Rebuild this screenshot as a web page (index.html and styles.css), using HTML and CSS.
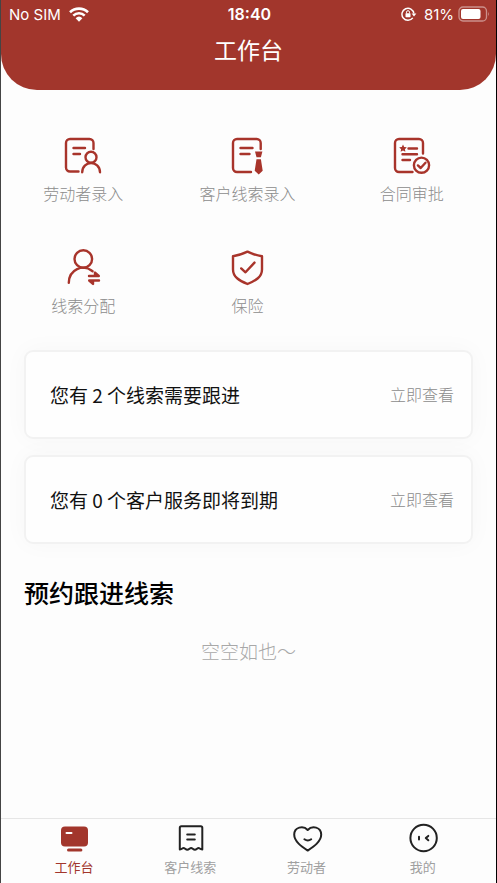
FILE: index.html
```html
<!DOCTYPE html>
<html lang="zh-CN">
<head>
<meta charset="utf-8">
<meta name="viewport" content="width=device-width, initial-scale=1">
<title>工作台</title>
<link rel="stylesheet" href="styles.css">
</head>
<body>
<div class="app">
  <header class="header">
    <div class="status">
      <div class="status-side">
        <span>No SIM</span>
        <svg class="wifi" viewBox="0 0 20 15" aria-hidden="true">
          <g fill="none" stroke="#fff" stroke-width="2.6">
            <path d="M1 5.2a13 13 0 0 1 18 0"/>
            <path d="M4.3 8.6a8.2 8.2 0 0 1 11.4 0"/>
          </g>
          <path d="M6.6 11.2a5 5 0 0 1 6.8 0L10 14.8z" fill="#fff"/>
        </svg>
      </div>
      <time class="clock">18:40</time>
      <div class="status-side status-end">
        <svg class="lock" viewBox="0 0 16 14" aria-hidden="true">
          <path d="M11.800 10.800A6 6 0 1 1 12.900 6.500" fill="none" stroke="#fff" stroke-width="1.4"/>
          <path d="M10.600 6.400h4.800L13 9.600z" fill="#fff"/>
          <rect x="4.500" y="6.200" width="5" height="4" rx=".6" fill="#fff"/>
          <path d="M5.500 6.400V5.200a1.500 1.500 0 0 1 3 0v1.200" fill="none" stroke="#fff"/>
        </svg>
        <span>81%</span>
        <svg class="battery" viewBox="0 0 32 16" aria-hidden="true">
          <rect x="1" y="1" width="27.500" height="14" rx="4" fill="none" stroke="#fff" stroke-opacity=".45" stroke-width="1.3"/>
          <rect x="3" y="3" width="19.500" height="10" rx="2" fill="#fff"/>
          <path d="M30 5.700q1.600 2.300 0 4.600z" fill="#fff" fill-opacity=".5"/>
        </svg>
      </div>
    </div>
    <h1 class="title">工作台</h1>
  </header>

  <main class="main">
    <nav class="shortcuts" aria-label="功能">
      <a class="shortcut" href="#worker">
        <svg class="icon" viewBox="0 0 40 40" aria-hidden="true">
          <path d="M15.500 35.500H7a4 4 0 0 1-4-4V7a4 4 0 0 1 4-4H26.500a4 4 0 0 1 4 4v6M10.500 12h11.500M10.500 18h6.500"/>
          <circle cx="28" cy="21.300" r="5.500"/>
          <path d="M19.200 36.200c.4-12.200 17.400-12.200 17.800 0"/>
        </svg>
        <span>劳动者录入</span>
      </a>
      <a class="shortcut" href="#lead">
        <svg class="icon" viewBox="0 0 40 40" aria-hidden="true">
          <path d="M24 36H10a4 4 0 0 1-4-4V7a4 4 0 0 1 4-4h19.700a4 4 0 0 1 4 4v6M13.500 12h12M13.500 18h9"/>
          <path class="solid" d="M28 15.500h7.400l-1.500 5.700h-4.400zM29.500 23.300h4.400l1.800 11.400-4 3.700-4-3.700z"/>
        </svg>
        <span>客户线索录入</span>
      </a>
      <a class="shortcut" href="#contract">
        <svg class="icon" viewBox="0 0 40 40" aria-hidden="true">
          <path d="M20.500 36H7a4 4 0 0 1-4-4V7a4 4 0 0 1 4-4h20a4 4 0 0 1 4 4v10.500M16.500 12.500H25M10.500 18.300H25M10.500 24H18"/>
          <path class="solid" d="M11 8.600l1.200 2.400 2.600.3-1.900 1.900.5 2.600-2.400-1.200-2.400 1.200.5-2.600-1.900-1.900 2.600-.3z"/>
          <circle cx="29.500" cy="29.200" r="7.600"/>
          <path d="M25.900 29.400l2.800 2.600 4.800-5.200"/>
        </svg>
        <span>合同审批</span>
      </a>
      <a class="shortcut" href="#assign">
        <svg class="icon" viewBox="0 0 40 40" aria-hidden="true">
          <circle cx="20.300" cy="11" r="8.800"/>
          <path d="M5.800 34.800C6 21.500 19.800 15.500 29.600 23.200"/>
          <path d="M26 28h9.800l-3.800-3.400V28M36 32.500h-9.800l3.800 3.400v-3.400"/>
        </svg>
        <span>线索分配</span>
      </a>
      <a class="shortcut" href="#insurance">
        <svg class="icon" viewBox="0 0 40 40" aria-hidden="true">
          <path d="M20.500 3.700q7.200 3.500 14.500 4.500v13.300c0 7.500-6.200 11-14.500 14.500C12.200 32.500 6 29 6 21.500V8.200q7.300-1 14.500-4.500zM14.200 20.400l4.300 3.900 9-9.700"/>
        </svg>
        <span>保险</span>
      </a>
    </nav>

    <section class="cards">
      <div class="card">
        <p class="card-text">您有 2 个线索需要跟进</p>
        <a class="card-link" href="#follow">立即查看</a>
      </div>
      <div class="card">
        <p class="card-text">您有 0 个客户服务即将到期</p>
        <a class="card-link" href="#expire">立即查看</a>
      </div>
    </section>

    <section class="booked">
      <h2 class="heading">预约跟进线索</h2>
      <p class="empty">空空如也～</p>
    </section>
  </main>

  <nav class="tabs" aria-label="主导航">
    <a class="tab tab-active" href="#home" aria-current="page">
      <svg class="tab-icon" viewBox="0 0 32 32" aria-hidden="true">
        <rect class="fill" x="3" y="4.400" width="27" height="20" rx="4"/>
        <rect class="fill" x="9" y="26.400" width="15.400" height="3.200" rx="1.500"/>
        <path d="M8.500 11h5" stroke="#fff"/>
      </svg>
      <span>工作台</span>
    </a>
    <a class="tab" href="#leads">
      <svg class="tab-icon" viewBox="0 0 32 32" aria-hidden="true">
        <path d="M5.800 27.500V5.700a1.500 1.500 0 0 1 1.500-1.500h19.500a1.500 1.500 0 0 1 1.500 1.500v21.800c-2.500-.2-2.600-1.500-3.700-1.500-1.300 0-2 1.800-3.700 1.800s-2.500-1.800-3.800-1.800-2.100 1.800-3.800 1.800-2.500-1.800-3.800-1.800c-1.200 0-1.200 1.300-3.700 1.500zM13.200 12.500h7.600M13.200 17.600h7.600"/>
      </svg>
      <span>客户线索</span>
    </a>
    <a class="tab" href="#workers">
      <svg class="tab-icon" viewBox="0 0 32 32" aria-hidden="true">
        <path d="M16.700 28.600C10.500 24.500 3.200 19.500 3.200 12.600c0-7.500 9-9.600 13.500-4.600 4.500-5 13.500-2.900 13.500 4.600 0 6.900-7.300 11.900-13.500 16zM13.400 17.300q3.400 2.500 6.800 0"/>
      </svg>
      <span>劳动者</span>
    </a>
    <a class="tab" href="#mine">
      <svg class="tab-icon" viewBox="0 0 32 32" aria-hidden="true">
        <circle cx="16.600" cy="16" r="13.200"/>
        <path d="M12 14.800v2.600M21.300 13.900l-2.500 2.200 2.500 2.200"/>
      </svg>
      <span>我的</span>
    </a>
  </nav>
</div>
</body>
</html>
```
FILE: styles.css
```css
* {
  box-sizing: border-box;
}

body {
  margin: 0;
  background: #fdfdfd;
  color: #111;
  font-family: "Noto Sans CJK SC", sans-serif;
}

h1, h2, p {
  margin: 0;
}

a {
  color: inherit;
  text-decoration: none;
}

.app {
  display: flex;
  flex-direction: column;
  min-height: 100vh;
  border-left: 1px solid #444;
  border-right: 1px solid #000;
}

.header {
  height: 90px;
  border-radius: 0 0 36px 36px;
  background: #a2362c;
  color: #fff;
}

.status {
  display: grid;
  grid-template-columns: 1fr auto 1fr;
  align-items: center;
  height: 28px;
  padding: 0 6px 0 8px;
  font-family: Inter, sans-serif;
  font-size: 15px;
}

.status-side {
  display: flex;
  align-items: center;
  gap: 8px;
}

.status-end {
  justify-content: flex-end;
  gap: 4px;
}

.clock {
  font-size: 16px;
  font-weight: 600;
}

.wifi {
  width: 20px;
  height: 15px;
}

.lock {
  width: 16px;
  height: 14px;
  margin-right: 3px;
}

.battery {
  width: 32px;
  height: 16px;
}

.title {
  font-size: 23px;
  font-weight: 400;
  line-height: 42px;
  text-align: center;
}

.main {
  flex: 1;
}

.shortcuts {
  display: grid;
  grid-template-columns: repeat(3, 1fr);
  row-gap: 42px;
  padding: 46px 2px 0 0;
}

.shortcut {
  display: flex;
  flex-direction: column;
  align-items: center;
  gap: 4px;
  color: #8c8c8c;
  font-size: 16px;
  font-weight: 300;
  line-height: 26px;
}

.icon {
  width: 40px;
  height: 40px;
  fill: none;
  stroke: #a8342b;
  stroke-width: 2.4;
  stroke-linecap: round;
  stroke-linejoin: round;
}

.icon .solid {
  fill: #a8342b;
  stroke: none;
}

.cards {
  display: grid;
  gap: 16px;
  padding: 32px 23px 0;
}

.card {
  display: flex;
  align-items: center;
  justify-content: space-between;
  height: 89px;
  padding: 0 17px 1px 24px;
  border: 2px solid #f2f2f2;
  border-radius: 9px;
  background: #fefefe;
  box-shadow: 0 0 24px rgba(0, 0, 0, 0.03);
}

.card-text {
  font-size: 19px;
}

.card-link {
  color: #8c8c8c;
  font-size: 16px;
  font-weight: 300;
}

.booked {
  padding: 29px 23px 0;
}

.heading {
  color: #000;
  font-size: 25px;
  font-weight: 500;
  line-height: 38px;
}

.empty {
  padding-top: 26px;
  color: #a8a8a8;
  font-size: 19px;
  font-weight: 300;
  line-height: 28px;
  text-align: center;
}

.tabs {
  display: grid;
  grid-template-columns: repeat(4, 1fr);
  height: 65px;
  padding: 3px 15px 0;
  border-top: 1px solid #e6e6e6;
}

.tab {
  display: flex;
  flex-direction: column;
  align-items: center;
  gap: 3px;
  color: #a0a0a0;
  font-size: 13px;
  line-height: 20px;
}

.tab-active {
  color: #a2362c;
}

.tab-icon {
  width: 32px;
  height: 32px;
  fill: none;
  stroke: #222;
  stroke-width: 2;
  stroke-linecap: round;
  stroke-linejoin: round;
}

.tab-icon .fill {
  fill: #a2362c;
  stroke: none;
}
```
